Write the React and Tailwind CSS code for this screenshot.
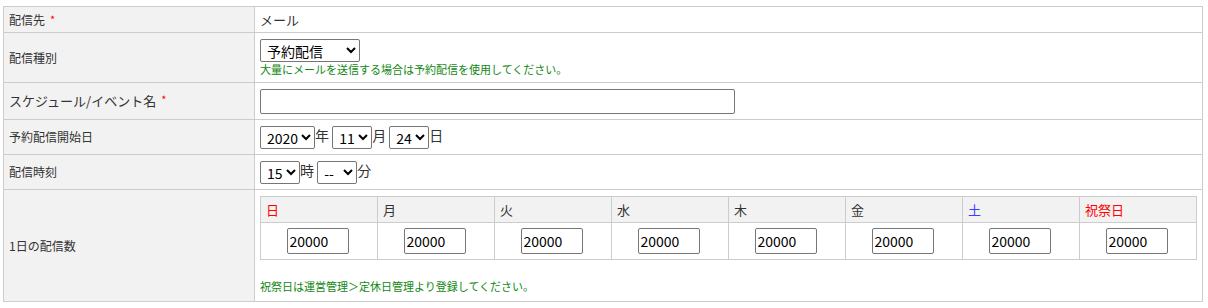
const days = [
  { label: '日', color: 'text-[#ff0000]' },
  { label: '月', color: 'text-[#333333]' },
  { label: '火', color: 'text-[#333333]' },
  { label: '水', color: 'text-[#333333]' },
  { label: '木', color: 'text-[#333333]' },
  { label: '金', color: 'text-[#333333]' },
  { label: '土', color: 'text-[#3c3cff]' },
  { label: '祝祭日', color: 'text-[#ff0000]' },
];

const Req = () => <span className="text-[#ff0000] text-[11px] ml-[5px] align-top">*</span>;

const sel =
  'h-[23px] border border-[#767676] rounded-[2px] bg-white text-[14px] text-black pl-[2px] align-middle';

export default function App() {
  return (
    <div
      className="px-[3px] pt-[6px] bg-white min-h-[308px]"
      style={{ fontFamily: '"Noto Sans CJK JP", "Noto Sans", sans-serif' }}
    >
      <table className="w-[1200px] border-collapse text-[12px] text-[#333333]">
        <tbody>
          <tr>
            <td className="w-[251px] h-[26px] bg-[#f2f2f2] border border-[#cccccc] pl-[5px]">
              配信先<Req />
            </td>
            <td className="border border-[#cccccc] px-[5px] text-[13px]">メール</td>
          </tr>
          <tr>
            <td className="h-[50px] bg-[#f2f2f2] border border-[#cccccc] pl-[5px]">配信種別</td>
            <td className="border border-[#cccccc] px-[5px]">
              <select className={`${sel} w-[100px]`} defaultValue="予約配信">
                <option>予約配信</option>
                <option>即時配信</option>
              </select>
              <div className="text-[11px] text-[#118811] leading-[13px] mt-[1px]">
                大量にメールを送信する場合は予約配信を使用してください。
              </div>
            </td>
          </tr>
          <tr>
            <td className="h-[37px] bg-[#f2f2f2] border border-[#cccccc] pl-[5px] text-[13px]">
              スケジュール/イベント名<Req />
            </td>
            <td className="border border-[#cccccc] px-[5px]">
              <input
                type="text"
                className="w-[475px] h-[25px] border border-[#767676] rounded-[2px] align-middle"
              />
            </td>
          </tr>
          <tr>
            <td className="h-[35px] bg-[#f2f2f2] border border-[#cccccc] pl-[5px]">予約配信開始日</td>
            <td className="border border-[#cccccc] px-[5px] text-[14px]">
              <select className={`${sel} w-[55px]`} defaultValue="2020">
                <option>2020</option>
                <option>2021</option>
              </select>
              年{' '}
              <select className={`${sel} w-[40px]`} defaultValue="11">
                <option>11</option>
                <option>12</option>
              </select>
              月{' '}
              <select className={`${sel} w-[40px]`} defaultValue="24">
                <option>24</option>
                <option>25</option>
              </select>
              日
            </td>
          </tr>
          <tr>
            <td className="h-[35px] bg-[#f2f2f2] border border-[#cccccc] pl-[5px]">配信時刻</td>
            <td className="border border-[#cccccc] px-[5px] text-[14px]">
              <select className={`${sel} w-[40px]`} defaultValue="15">
                <option>15</option>
                <option>16</option>
              </select>
              時{' '}
              <select className={`${sel} w-[40px]`} defaultValue="--">
                <option>--</option>
                <option>00</option>
              </select>
              分
            </td>
          </tr>
          <tr>
            <td className="h-[110px] bg-[#f2f2f2] border border-[#cccccc] pl-[5px]">1日の配信数</td>
            <td className="border border-[#cccccc] px-[5px] pt-[6px] pb-[8px] align-top">
              <table className="w-full border-collapse table-fixed">
                <thead>
                  <tr>
                    {days.map((d) => (
                      <th
                        key={d.label}
                        className={`h-[26px] bg-[#f2f2f2] border border-[#cccccc] text-left font-normal pl-[5px] text-[13px] ${d.color}`}
                      >
                        {d.label}
                      </th>
                    ))}
                  </tr>
                </thead>
                <tbody>
                  <tr>
                    {days.map((d) => (
                      <td key={d.label} className="h-[37px] border border-[#cccccc] text-center pr-[3px]">
                        <input
                          type="text"
                          defaultValue="20000"
                          className="w-[62px] h-[26px] border border-[#767676] rounded-[2px] text-[14px] text-black px-[2px] align-middle"
                        />
                      </td>
                    ))}
                  </tr>
                </tbody>
              </table>
              <div className="text-[11px] text-[#118811] leading-[13px] mt-[20px]">
                祝祭日は運営管理＞定休日管理より登録してください。
              </div>
            </td>
          </tr>
        </tbody>
      </table>
    </div>
  );
}
